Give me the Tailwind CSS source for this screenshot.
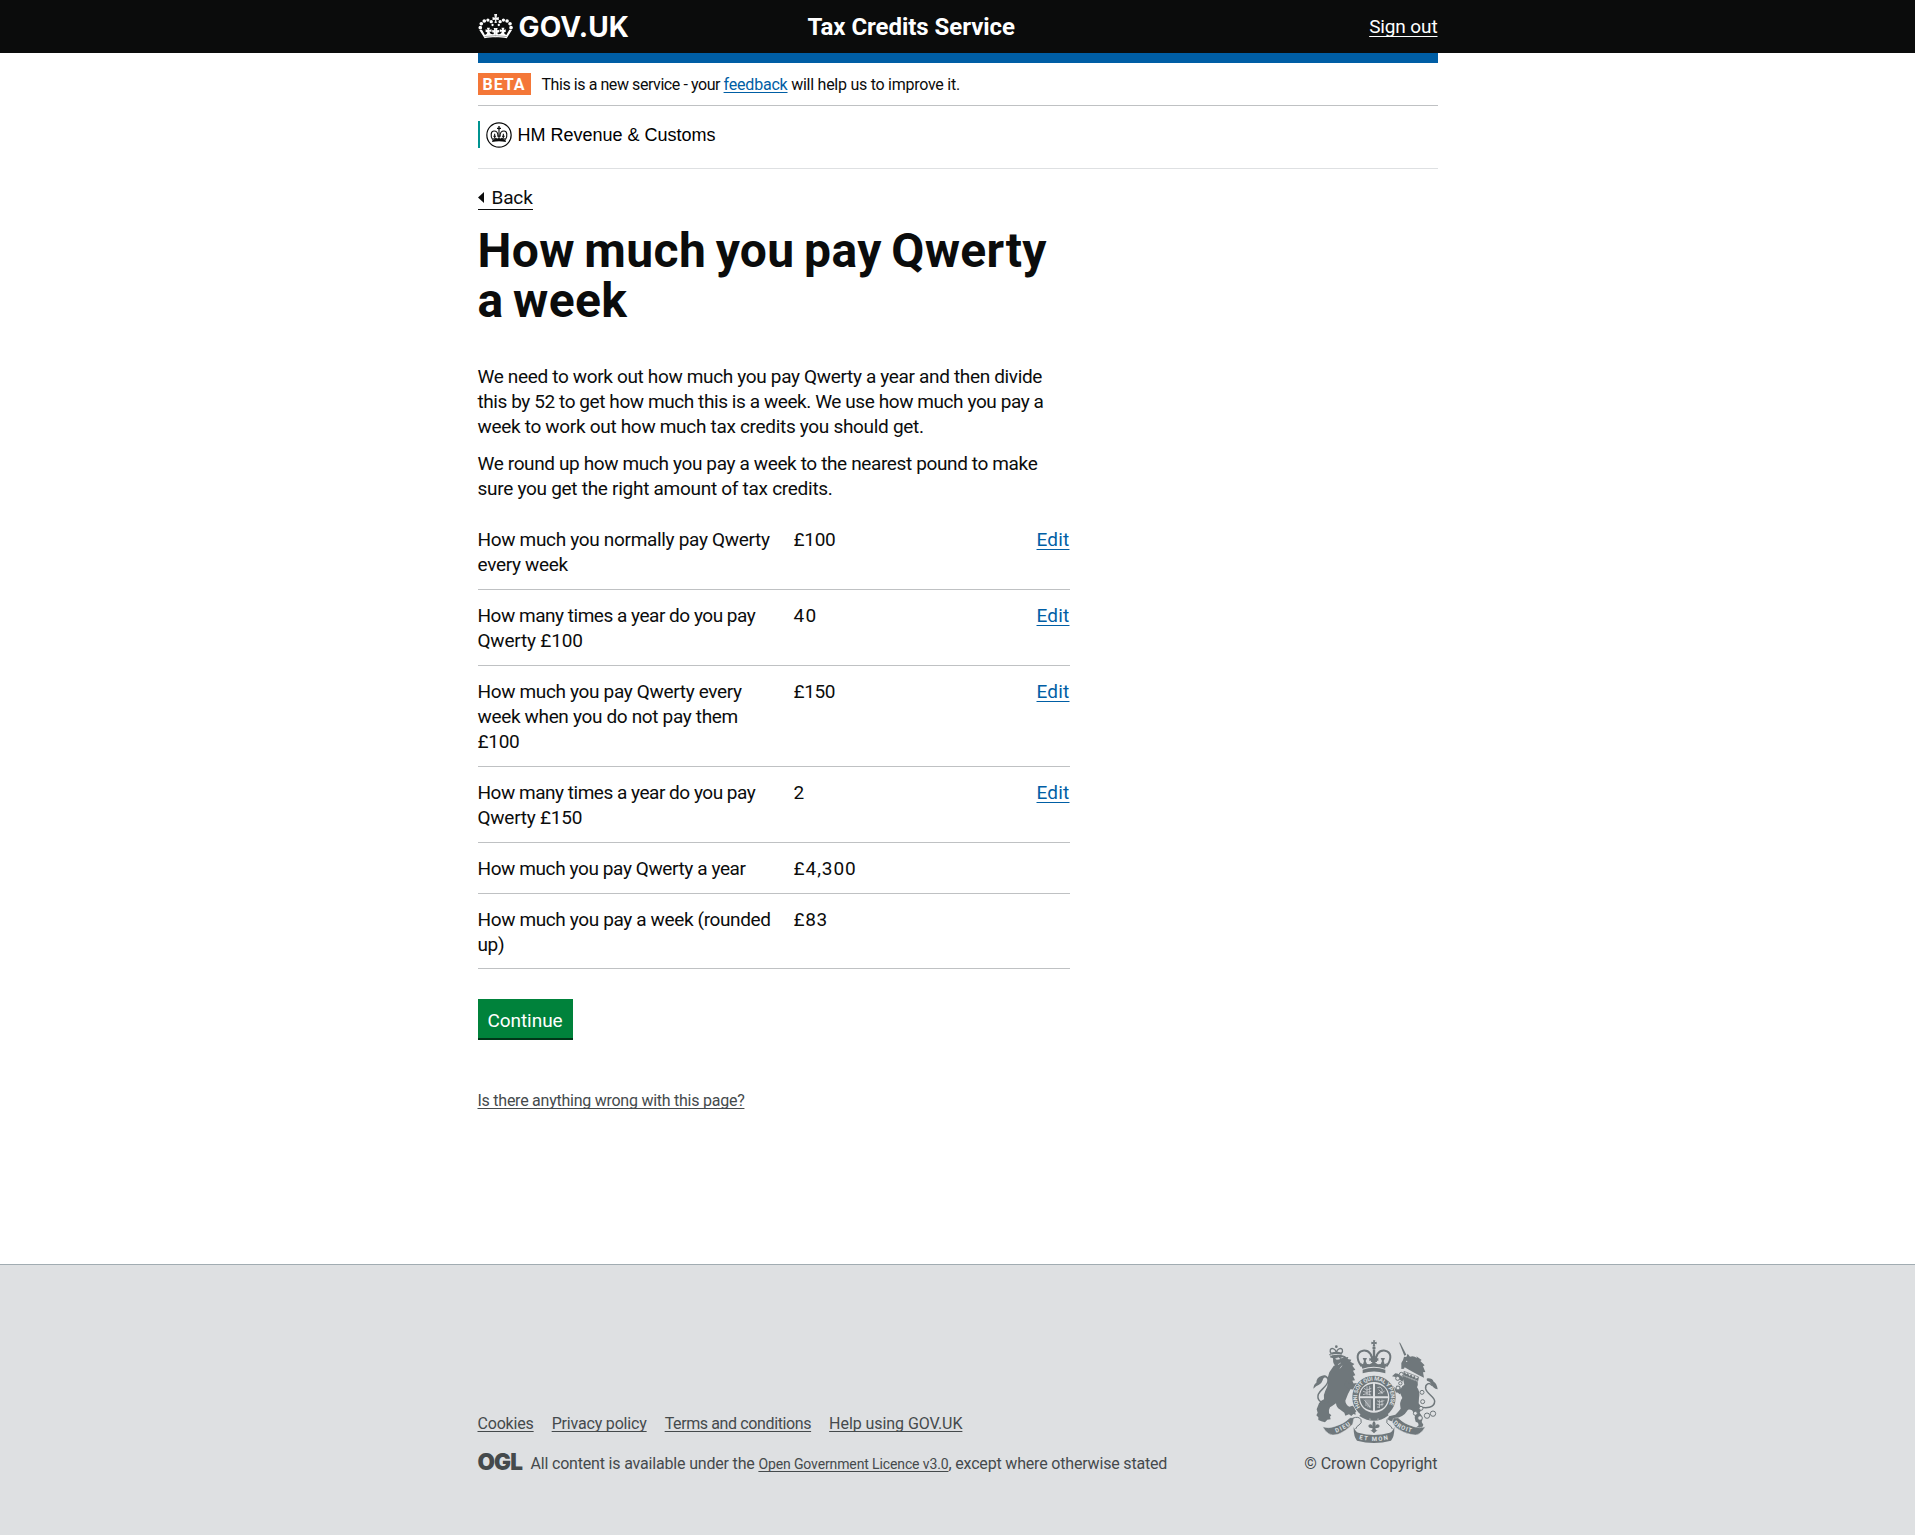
<!DOCTYPE html>
<html lang="en">
<head>
<meta charset="utf-8">
<title>How much you pay Qwerty a week - Tax Credits Service - GOV.UK</title>
<script src="https://cdn.jsdelivr.net/npm/@tailwindcss/browser@4"></script>
</head>
<body class="flex min-h-screen flex-col bg-white font-['Roboto',sans-serif] text-[19px] leading-[25px] tracking-[-0.34px] text-[#0b0c0c]">

<header class="bg-[#0b0c0c] text-white">
  <div class="mx-auto flex h-[53px] w-[960px] items-center">
    <a href="#" class="flex w-[330px] items-center gap-[6px]">
      <svg class="h-[26px] w-[35px]" viewBox="24 23 106 78" fill="#fff">
        <g id="half">
          <circle cx="31" cy="64" r="5.5"/><circle cx="34" cy="52" r="5.5"/><circle cx="43" cy="44" r="5.5"/><circle cx="54" cy="41" r="5"/><circle cx="64" cy="46" r="5"/><circle cx="68" cy="56" r="3.5"/>
          <path d="M28 71l8-1 9 16c4-1 7-4 7-8l-5-1v-8l6 2-2-7h9l-2 7 7-2v8l-6-1c0 5 4 8 9 8l4-1-1-5-4 1v-8l5 1 1-3-2-4h7v28c-13 0-24 1-34 3z"/>
          <path d="M73 22h5v28h-4l2-10-8 1v-9l7 2z"/>
        </g>
        <use href="#half" transform="matrix(-1 0 0 1 155 0)"/>
        <path d="M44 91q33-6 67 0" fill="none" stroke="#0b0c0c" stroke-width="1"/>
      </svg>
      <span class="pt-px font-['Inter',sans-serif] text-[28px] font-bold leading-[30px] tracking-[0.15px]">GOV.UK</span>
    </a>
    <span class="flex-1 text-2xl font-bold leading-[30px] tracking-[-0.05px]">Tax Credits Service</span>
    <a href="#" class="underline decoration-1 underline-offset-[3px] [text-decoration-skip-ink:none] tracking-[-0.12px]">Sign out</a>
  </div>
</header>

<main class="mx-auto flex w-[960px] flex-1 flex-col items-start">
  <div class="h-[10px] w-full bg-[#005ea5]"></div>
  <div class="flex h-[43px] w-full items-center border-b border-[#bfc1c3]">
    <strong class="mr-[11px] flex h-[22px] w-[53px] items-center justify-center bg-[#f47738] pt-[2px] text-base font-bold tracking-[0.9px] text-white">BETA</strong>
    <p class="whitespace-pre pt-[2px] text-base leading-5 tracking-[-0.43px]">This is a new service - your <a href="#" class="text-[#005ea5] underline decoration-1 underline-offset-2 [text-decoration-skip-ink:none] tracking-[-0.2px]">feedback</a><span class="tracking-[-0.26px]"> will help us to improve it.</span></p>
  </div>
  <div class="flex h-[63px] w-full items-start border-b border-[#dee0e2] pt-[15px]">
    <div class="flex h-[27px] items-center border-l-2 border-[#009390] pl-[6px]">
      <svg class="mr-[6px] size-[26px]" viewBox="48 35 78 78" fill="#0b0c0c">
        <circle cx="87" cy="74" r="36.5" fill="none" stroke="#0b0c0c" stroke-width="3.6"/>
        <path d="M85 47h4v5h4v4h-4v5h-4v-5h-4v-4h4zM68 88q19-5 38 0l2 7q-21-5-42 0z"/>
        <g fill="none" stroke="#0b0c0c">
          <path d="M68 88C60 76 63 62 72 62s12 7 12 15M106 88c8-12 5-26-4-26s-12 7-12 15" stroke-width="3.4"/>
          <path d="M87 61v26M74 70v14m-4-6h8M100 70v14m-4-6h8M82 78h10M69 85q5 3 9-1 5 4 9 0 5 4 9 0 4 4 9 1" stroke-width="3.2"/>
        </g>
      </svg>
      <span class="pt-[2px] font-['Liberation_Sans',sans-serif] text-lg leading-[27px] tracking-normal text-black">HM Revenue &amp; Customs</span>
    </div>
  </div>

  <a href="#" class="mt-4 flex h-[25px] items-center border-b border-[#0b0c0c] pt-px tracking-[-0.15px]">
    <svg class="mr-2 h-[11px] w-[6px]" viewBox="0 0 6 11" fill="#0b0c0c"><path d="M0 5.5L6 0v11z"/></svg>Back</a>

  <h1 class="mt-4 text-5xl font-bold leading-[50px] tracking-[0.35px] [word-spacing:-2.7px]">How much you pay Qwerty<br>a week</h1>

  <div class="mt-[38px] flex flex-col gap-3 whitespace-nowrap">
    <p>We need to work out how much you pay Qwerty a year and then divide<br><span class="tracking-[-0.42px]">this by 52 to get how much this is a week. We use how much you pay a</span><br><span class="tracking-[-0.31px]">week to work out how much tax credits you should get.</span></p>
    <p class="tracking-[-0.37px]">We round up how much you pay a week to the nearest pound to make<br><span class="tracking-[-0.28px]">sure you get the right amount of tax credits.</span></p>
  </div>

  <dl class="mt-[13px] w-[592px] whitespace-nowrap">
    <div class="flex border-b border-[#bfc1c3] pb-3 pt-[13px]">
      <dt class="w-[316px] tracking-[-0.32px]">How much you normally pay Qwerty<br>every week</dt>
      <dd class="flex-1 tracking-[-0.3px]">£100</dd>
      <dd><a href="#" class="tracking-[0.2px] text-[#005ea5] underline decoration-1 underline-offset-[3px]">Edit</a></dd>
    </div>
    <div class="flex border-b border-[#bfc1c3] pb-3 pt-[13px]">
      <dt class="w-[316px] tracking-[-0.48px]">How many times a year do you pay<br><span class="tracking-[-0.2px]">Qwerty £100</span></dt>
      <dd class="flex-1 tracking-[1.2px]">40</dd>
      <dd><a href="#" class="tracking-[0.2px] text-[#005ea5] underline decoration-1 underline-offset-[3px]">Edit</a></dd>
    </div>
    <div class="flex border-b border-[#bfc1c3] pb-3 pt-[13px]">
      <dt class="w-[316px] tracking-[-0.34px]">How much you pay Qwerty every<br>week when you do not pay them<br><span class="tracking-[-0.3px]">£100</span></dt>
      <dd class="flex-1 tracking-[-0.4px]">£150</dd>
      <dd><a href="#" class="tracking-[0.2px] text-[#005ea5] underline decoration-1 underline-offset-[3px]">Edit</a></dd>
    </div>
    <div class="flex border-b border-[#bfc1c3] pb-3 pt-[13px]">
      <dt class="w-[316px] tracking-[-0.48px]">How many times a year do you pay<br><span class="tracking-[-0.25px]">Qwerty £150</span></dt>
      <dd class="flex-1">2</dd>
      <dd><a href="#" class="tracking-[0.2px] text-[#005ea5] underline decoration-1 underline-offset-[3px]">Edit</a></dd>
    </div>
    <div class="flex border-b border-[#bfc1c3] pb-3 pt-[13px]">
      <dt class="w-[316px] tracking-[-0.4px]">How much you pay Qwerty a year</dt>
      <dd class="flex-1 tracking-[0.95px]">£4,300</dd>
    </div>
    <div class="flex border-b border-[#bfc1c3] pb-[11px] pt-[13px]">
      <dt class="w-[316px] tracking-[-0.37px]">How much you pay a week (rounded<br>up)</dt>
      <dd class="flex-1 tracking-[0.6px]">£83</dd>
    </div>
  </dl>

  <button class="mt-[30px] h-[41px] w-[95px] border-b-2 border-[#003618] bg-[#00823b] pt-[3px] tracking-[-0.05px] text-white">Continue</button>

  <a href="#" class="mt-[51px] text-base leading-5 tracking-[-0.25px] text-[#454a4c] underline decoration-1 underline-offset-2 [text-decoration-skip-ink:none]">Is there anything wrong with this page?</a>
</main>

<footer class="h-[271px] border-t border-[#a1acb2] bg-[#dee0e2] text-base leading-5 tracking-[-0.18px] text-[#454a4c]">
  <div class="mx-auto flex w-[960px] items-start justify-between">
    <div class="flex flex-col gap-5 pt-[149px]">
      <ul class="flex gap-[18px]">
        <li><a href="#" class="underline decoration-1 underline-offset-2 [text-decoration-skip-ink:none]">Cookies</a></li>
        <li><a href="#" class="underline decoration-1 underline-offset-2 [text-decoration-skip-ink:none]">Privacy policy</a></li>
        <li><a href="#" class="tracking-[-0.38px] underline decoration-1 underline-offset-2 [text-decoration-skip-ink:none]">Terms and conditions</a></li>
        <li><a href="#" class="tracking-[-0.06px] underline decoration-1 underline-offset-2 [text-decoration-skip-ink:none]">Help using GOV.UK</a></li>
      </ul>
      <div class="flex items-start">
        <svg class="-mt-px mr-[10px] h-5 w-[43px] overflow-visible" viewBox="0 0 43 20" fill="#454a4c"><text x="-0.5" y="16.7" font-family="Inter" font-weight="900" font-size="22.5" letter-spacing="-2" textLength="43.5">OGL</text></svg>
        <p class="whitespace-pre">All content is available under the <a href="#" class="text-sm leading-5 tracking-[-0.12px] underline decoration-1 underline-offset-2 [text-decoration-skip-ink:none]">Open Government Licence v3.0</a>, except where otherwise stated</p>
      </div>
    </div>
    <div class="flex flex-col items-end pt-[75px]">
      <svg class="h-[103px] w-[126px]" viewBox="66 43 378 309" fill="#6f777b">
        <!-- imperial crown -->
        <path d="M249 44h7l-2 6 6-2v8l-6-2 2 8h-8l2-8-6 2v-8l6 2z"/><circle cx="252" cy="67" r="5"/>
        <g fill="none" stroke="#6f777b">
          <path d="M215 122C196 98 201 78 219 75c20-2 29 14 27 34M289 122c19-24 14-44-4-47-20-2-29 14-27 34" stroke-width="6"/>
          <path d="M252 72v38" stroke-width="7"/>
        </g>
        <path d="M212 112l7 4 3-10-4-9h13l-4 9 4 9 8 1 8-5-2-7-7 2v-9l9 2-2-7h13l-2 7 9-2v9l-7-2-2 7 8 5 8-1 4-9-4-9h13l-4 9 3 10 7-4-6 17q-34-11-68 0zM218 132q34-11 68 0v11q-34-11-68 0z"/>
        <!-- lion -->
        <g fill="none" stroke="#6f777b" stroke-width="4"><path d="M124 84c-7-9-3-17 5-15s9 6 10 14M154 84c7-9 3-17-5-15s-9 6-9 14"/></g><circle cx="139" cy="63" r="4"/><path d="M123 81q16-5 33 0l-1 6q-16-4-31 0z"/>
        <path d="M120 99q-1-8 6-10 14-3 27-1 14 2 15 7l7-1-2 6 11 2-3 6 12 7-6 5 9 12-7 3 7 14-7 2 6 13-8 1 5 11-6 1q-3 14-12 28l-8 20q1 12 12 18l9-3 8 5 0 7 5 4-4 4 1 7-7-2-6 6-7-5-11 4-3-9-14-10q-10-6-11-18-11 8-18 12-5 8-3 18l7 6-4 4 2 8-10 1-7 8-11-3-9-4 0-8-6-6 4-8-3-10 7-18q6-9 15-12-2-15 4-26 7-11 8-26-2-16 4-29l15-22q-5-9-4-20l-9-3 1-5-4-3 6-5z"/>
        <path d="M168 165q12 14 26 8l10-1-5 11 6 5-12 4-18-3-12-10z"/>
        <path d="M137 99l9-3 3 4-9 1zM152 97l8-2M126 116l9 3M144 117l8-5M150 128l6-8" fill="#dee0e2" stroke="#dee0e2" stroke-width="2"/>
        <path d="M114 228c-22 8-34-6-29-22 5-14 26-22 29-40 2-12-9-17-20-10" fill="none" stroke="#6f777b" stroke-width="4.5"/>
        <path d="M70 189q1-13 9-18 0-16 17-21 10-4 16 3-13 1-14 11-3 10-11 13-9 3-17 12z"/>
        <!-- unicorn -->
        <path d="M327 50l4 2 18 35-6 3z"/>
        <path d="M334 112q6-8 8-19l7 1 4-10 7 9q12-3 21 4l-2-5 16 11-4 3 13 13-5 3 7 17-7 1 3 16-9-4q-5-3-9-5l-26-14-14-8-2 4-8 1z"/>
        <path d="M342 137l44 17-3 13-44-17z" fill="none" stroke="#6f777b" stroke-width="2"/>
        <path d="M343 138l6 8 5-4 4 9 6-5 4 9 6-5 3 9 8-4-1 10-43-16z"/>
        <path d="M337 150l46 18q2 9-2 17 10 12 6 32l-1 16 8 11q1 10-5 17 12 14 6 28l5 8-5 12-14 5-4-8 9-7-2-8-7-3q-5-9-2-20l-9-14q-6-4-12-2-8 13-18 19l-18 8-14 8-10-5 3-10 19-5 8-8 8-10q-5-20 5-32l-8-18-13 2-4 12 5 8-8 8-11-9 5-20-8-10q-6-9-12-11l4-8 13 0 10 11 9 9 13-1q4-10 11-13z"/>
        <path d="M306 152l10-9 8 1 18 14-5 10-17-13z"/>
        <path d="M318 180l12 2 5 16-6 8-7-6 2-10z"/>
        <circle cx="350" cy="107" r="2" fill="#dee0e2"/>
        <path d="M386 242c22 8 48 4 48-15 0-15-24-22-27-38-2-14 12-21 19-9" fill="none" stroke="#6f777b" stroke-width="4.5"/>
        <path d="M443 191q-15-4-18-14-4-10-14-12-3-8 4-7 12 0 16 10 9 4 12 23z"/>
        <g fill="#dee0e2" stroke="#6f777b" stroke-width="3"><circle cx="334" cy="146" r="6"/><circle cx="323" cy="158" r="6"/><circle cx="331" cy="173" r="5"/><circle cx="324" cy="187" r="6"/><circle cx="396" cy="200" r="6"/><circle cx="398" cy="228" r="6"/><circle cx="393" cy="248" r="6"/><circle cx="376" cy="263" r="6"/><circle cx="390" cy="277" r="7"/><circle cx="411" cy="270" r="8"/><circle cx="429" cy="264" r="8"/></g>
        <!-- garter and shield -->
        <circle cx="252" cy="215" r="67" fill="#dee0e2"/>
        <path d="M214 262q38 26 76-2l6 9q-42 32-88 2z"/><circle cx="240" cy="279" r="2.5" fill="#dee0e2"/><circle cx="264" cy="279" r="2.5" fill="#dee0e2"/>
        <circle cx="252" cy="215" r="55.5" fill="none" stroke="#6f777b" stroke-width="19"/>
        <path id="garter" d="M212.3 246A50.5 50.5 0 1 1 291.7 246" fill="none"/>
        <text font-family="Roboto" font-weight="700" font-size="17" fill="#dee0e2"><textPath href="#garter" startOffset="2" textLength="212">HONI SOIT QUI MAL Y PENSE</textPath></text>
        <path d="M249 174v38h-39q2-34 39-38zM255 174q37 4 39 38h-39zM249 218v37q-35-2-39-37zM255 218h39q-4 35-39 37z"/>
        <g fill="none" stroke="#dee0e2" stroke-width="2">
          <path d="M222 188l8 5 14-5M219 197l10 3 15-3M219 207l11-3 13 4M231 182v27M239 181v28M222 222l18 22M228 221v20M234 221v24M240 221v27M262 186q10-6 14 4t-12 14M272 204l12-8M266 192l12 12M261 225l8 4 14-4M260 235l9 3 12-3M261 244l9 1M268 222v24M276 222v20"/>
        </g>
        <!-- motto scroll -->
        <g stroke="#dee0e2" stroke-width="1.5">
          <path d="M98 303q18 6 34 0 30-8 48-27l12 0-4 20q-22 22-44 30-18 5-28-2-12-8-18-21zM406 303q-18 6-34 0-30-8-48-27l-14 2-3 12q5 10 11 16 22 16 44 20 18 5 26-2 12-8 18-21z"/>
        </g>
        <path d="M188 278q18-8 25 4 4 10-6 16-8 4-10 12M316 278q-18-8-25 4-4 10 6 16 8 4 10 12" fill="none" stroke="#6f777b" stroke-width="3"/>
        <path d="M191 304q6 16 14 17 47 14 94 0 8-1 14-17 1 28-10 41-51 14-102 0-11-13-10-41z"/>
        <path d="M252 286q8 8 3 17 5-11 13-5 3 8-7 9l-5 1 2 6h5l-7 5-4 4-4-4-7-5h5l2-6-5-1q-10-1-7-9 8-6 13 5-5-9 3-17z"/>
        <path id="dieu" d="M138 321q30-10 50-29" fill="none"/><path id="mon" d="M207 340q45 12 92 0" fill="none"/><path id="droit" d="M309 293q22 22 62 29" fill="none"/>
        <g font-family="Roboto" font-weight="700" font-size="18" fill="#dee0e2">
          <text><textPath href="#dieu" textLength="50">DIEU</textPath></text><text><textPath href="#mon" textLength="88">ET MON</textPath></text><text><textPath href="#droit" textLength="62">DROIT</textPath></text>
        </g>
      </svg>
      <p class="mt-[11px] tracking-[-0.08px]">© Crown Copyright</p>
    </div>
  </div>
</footer>
</body>
</html>
